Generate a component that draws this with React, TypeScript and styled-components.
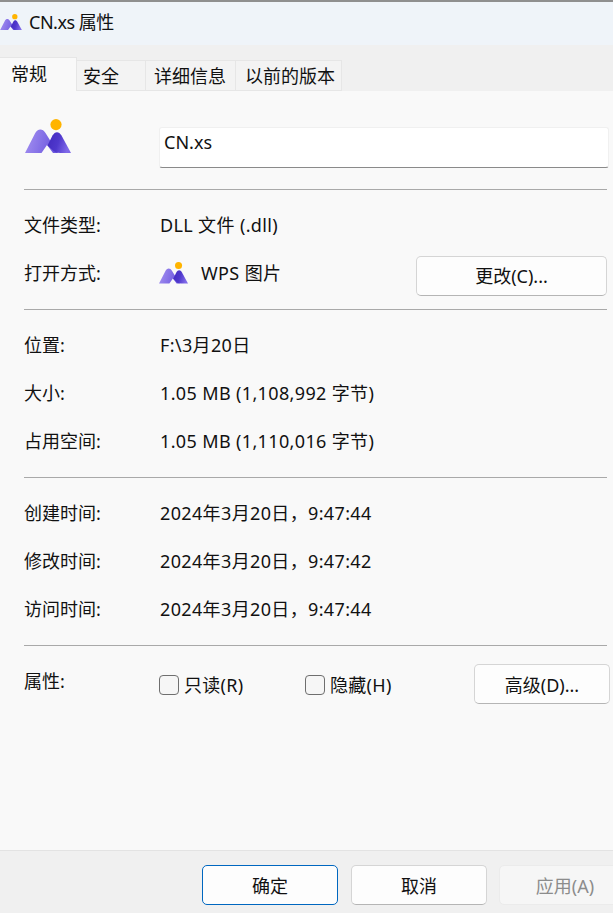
import React, { useId } from "react";
import styled, { createGlobalStyle } from "styled-components";

const Global = createGlobalStyle`
  html, body { margin: 0; padding: 0; background: #f9f9f9; overflow: hidden; }
  body { font-family: "Noto Sans", "Noto Sans CJK SC", sans-serif; font-size: 18px; color: #111; line-height: 24px; }
  * { box-sizing: border-box; }
`;

const Dialog = styled.div`
  width: 613px;
  height: 913px;
  display: flex;
  flex-direction: column;
  overflow: hidden;
  background: #f9f9f9;
`;

const TitleBar = styled.div`
  height: 45px;
  flex: none;
  display: flex;
  align-items: center;
  gap: 7px;
  padding: 0 0 3px 0;
  background: #eff4f9;
  border-top: 2px solid #8f8f8f;
  letter-spacing: -0.5px;
`;

const TabStrip = styled.div`
  height: 46px;
  flex: none;
  display: flex;
  align-items: flex-end;
  background: #f0f0f0;
`;

const Tab = styled.div<{ $w: number; $pad: number; $active?: boolean }>`
  width: ${(p) => p.$w}px;
  height: ${(p) => (p.$active ? 34 : 31)}px;
  padding: ${(p) => (p.$active ? "0 0 2px" : "1px 0 0")};
  padding-left: ${(p) => p.$pad}px;
  display: flex;
  align-items: center;
  background: ${(p) => (p.$active ? "#f9f9f9" : "#f3f3f3")};
  border-top: 1px solid #e6e6e6;
  border-right: 1px solid #e6e6e6;
  border-bottom: ${(p) => (p.$active ? "0" : "1px solid #e6e6e6")};
  white-space: nowrap;
`;

const Body = styled.div`
  flex: 1;
  padding: 0 6px 0 24px;
  min-height: 0;
`;

const Head = styled.div`
  height: 98px;
  display: flex;
  align-items: flex-start;
  padding-top: 27px;
`;

const HeadIcon = styled.div`
  width: 135px;
  margin-left: 1px;
  margin-right: -1px;
  padding-top: 1px;
`;

const NameInput = styled.input`
  width: 450px;
  height: 41px;
  flex: none;
  margin-top: 9px;
  margin-right: -3px;
  padding: 0 4px 12px 4px;
  background: #fff;
  border: 1px solid #f0f0f0;
  border-bottom: 1px solid #8a8a8a;
  border-radius: 3px;
  font: inherit;
  color: #111;
  outline: none;
`;

const Section = styled.section`
  border-top: 1px solid #a9a9a9;
  padding: 12px 0 11px;
`;

const Row = styled.div`
  height: 48px;
  padding-bottom: 2px;
  display: grid;
  grid-template-columns: 136px 1fr auto;
  align-items: center;
  white-space: nowrap;
`;

const Value = styled.span`
  letter-spacing: 0.36px;
`;

const OpenWith = styled.div`
  display: flex;
  align-items: center;
  gap: 13px;
  margin-left: -1px;
`;

const Button = styled.button<{ $w: number; $variant?: "primary" | "disabled" }>`
  width: ${(p) => p.$w}px;
  height: 40px;
  flex: none;
  padding: 1px 0 0;
  font: inherit;
  color: ${(p) => (p.$variant === "disabled" ? "#8c8c8c" : "#111")};
  background: ${(p) => (p.$variant === "disabled" ? "#f6f6f6" : "#fdfdfd")};
  border: 1px solid
    ${(p) =>
      p.$variant === "primary" ? "#0067c0" : p.$variant === "disabled" ? "#ebebeb" : "#d5d5d5"};
  border-bottom-color: ${(p) =>
    p.$variant === "primary" ? "#0067c0" : p.$variant === "disabled" ? "#ebebeb" : "#b5b5b5"};
  border-radius: 5px;
`;

const ChangeButton = styled(Button)`
  margin: 5px 0 0;
`;

const Checks = styled.div`
  display: flex;
  align-items: center;
  padding-top: 8px;
`;

const CheckLabel = styled.label<{ $w: number }>`
  width: ${(p) => p.$w}px;
  display: flex;
  align-items: center;
  gap: 5px;
  margin-left: -1px;
  margin-right: 1px;
  letter-spacing: 0.3px;
`;

const CheckBox = styled.span`
  width: 20px;
  height: 20px;
  flex: none;
  background: #f6f6f6;
  border: 1px solid #6f6f6f;
  border-radius: 4px;
`;

const AdvancedButton = styled(Button)`
  margin-right: -3px;
  margin-top: 6px;
`;

const Footer = styled.div`
  height: 63px;
  flex: none;
  display: flex;
  gap: 13px;
  padding: 14px 0 0 202px;
  background: #f0f0f0;
  border-top: 1px solid #e3e3e3;
`;

const LastButton = styled(Button)`
  margin-left: -1px;
`;

const IconSvg = styled.svg`
  display: block;
  flex: none;
`;

function MountainIcon({ width }: { width: number }) {
  const id = useId();
  return (
    <IconSvg width={width} height={(width * 34) / 46} viewBox="0 0 46 34">
      <defs>
        <linearGradient id={id + "a"} x1="0" y1="0" x2="1" y2="0.2">
          <stop offset="0" stopColor="#a693f2" />
          <stop offset="1" stopColor="#6d58de" />
        </linearGradient>
        <linearGradient id={id + "b"} x1="0" y1="0" x2="1" y2="0.3">
          <stop offset="0" stopColor="#4128bd" />
          <stop offset="0.55" stopColor="#4f38cc" />
          <stop offset="1" stopColor="#7f69e8" />
        </linearGradient>
      </defs>
      <circle cx="31" cy="5.6" r="5.6" fill="#ffb400" />
      <path
        d="M0 34 L10 14.5 C12.5 9.5 17.5 9 20.5 14 L33 34 L28 34 L22 26 L16.5 34 Z"
        fill={`url(#${id}a)`}
      />
      <path
        d="M22.5 26.5 L27.5 16.5 C30 12 34 12 36.5 16.5 L46 34 L35 34 Q31 34 28.5 32 Z"
        fill={`url(#${id}b)`}
      />
    </IconSvg>
  );
}

export default function App() {
  return (
    <Dialog>
      <Global />
      <TitleBar>
        <MountainIcon width={22} />
        <span>CN.xs 属性</span>
      </TitleBar>
      <TabStrip>
        <Tab $w={77} $pad={11} $active>常规</Tab>
        <Tab $w={69} $pad={6}>安全</Tab>
        <Tab $w={90} $pad={8}>详细信息</Tab>
        <Tab $w={106} $pad={9}>以前的版本</Tab>
      </TabStrip>
      <Body>
        <Head>
          <HeadIcon>
            <MountainIcon width={46} />
          </HeadIcon>
          <NameInput readOnly value="CN.xs" />
        </Head>
        <Section>
          <Row>
            <span>文件类型:</span>
            <Value>DLL 文件 (.dll)</Value>
          </Row>
          <Row>
            <span>打开方式:</span>
            <OpenWith>
              <MountainIcon width={29} />
              <Value>WPS 图片</Value>
            </OpenWith>
            <ChangeButton $w={191}>更改(C)...</ChangeButton>
          </Row>
        </Section>
        <Section>
          <Row>
            <span>位置:</span>
            <Value>F:\3月20日</Value>
          </Row>
          <Row>
            <span>大小:</span>
            <Value>1.05 MB (1,108,992 字节)</Value>
          </Row>
          <Row>
            <span>占用空间:</span>
            <Value>1.05 MB (1,110,016 字节)</Value>
          </Row>
        </Section>
        <Section>
          <Row>
            <span>创建时间:</span>
            <Value>2024年3月20日，9:47:44</Value>
          </Row>
          <Row>
            <span>修改时间:</span>
            <Value>2024年3月20日，9:47:42</Value>
          </Row>
          <Row>
            <span>访问时间:</span>
            <Value>2024年3月20日，9:47:44</Value>
          </Row>
        </Section>
        <Section>
          <Row>
            <span>属性:</span>
            <Checks>
              <CheckLabel $w={146}>
                <CheckBox />
                <span>只读(R)</span>
              </CheckLabel>
              <CheckLabel $w={120}>
                <CheckBox />
                <span>隐藏(H)</span>
              </CheckLabel>
            </Checks>
            <AdvancedButton $w={136}>高级(D)...</AdvancedButton>
          </Row>
        </Section>
      </Body>
      <Footer>
        <Button $w={136} $variant="primary">确定</Button>
        <Button $w={136}>取消</Button>
        <LastButton $w={132} $variant="disabled">应用(A)</LastButton>
      </Footer>
    </Dialog>
  );
}
